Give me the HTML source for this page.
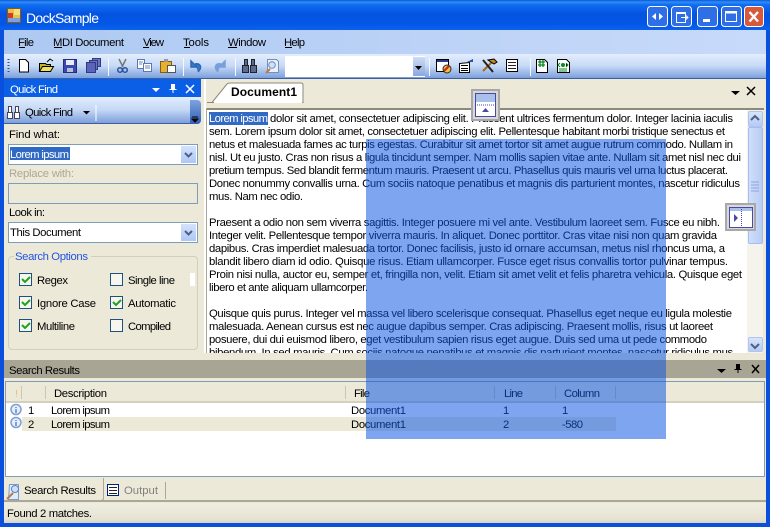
<!DOCTYPE html>
<html><head><meta charset="utf-8"><title>DockSample</title>
<style>
html,body{margin:0;padding:0;width:770px;height:527px;overflow:hidden;background:#ece9d8}
div{position:absolute;box-sizing:border-box}
svg{position:absolute;left:0;top:0}
text{font-family:"Liberation Sans",sans-serif;font-size:11.300px;fill:#000}
</style></head><body>
<div style="left:0;top:0;width:770px;height:527px;background:#0a50dc"></div>
<div style="left:0;top:0;width:770px;height:30px;background:linear-gradient(#0a58d8 0,#2f8cf5 2px,#0f6cf0 5px,#0553e0 14px,#0457e6 24px,#0a62ee 30px)"></div>
<div style="left:4px;top:30px;width:762px;height:24px;background:linear-gradient(90deg,#adc9f2,#c8dafa)"></div>
<div style="left:4px;top:54px;width:762px;height:25px;background:linear-gradient(#e4eefd,#c6d9f6 50%,#7ca0dc);border-bottom:1px solid #3b5f9e"></div>
<div style="left:4px;top:79px;width:762px;height:444px;background:#ece9d8"></div>
<div style="left:4px;top:79px;width:197px;height:18px;background:#0a5fe6"></div>
<div style="left:4px;top:97px;width:197px;height:27px;background:linear-gradient(#e3eefd,#c4d7f5 50%,#7d9fdb);border-bottom:1px solid #3b5f9e;border-radius:0 4px 4px 0"></div>
<div style="left:190px;top:100px;width:11px;height:24px;background:linear-gradient(#7fa2dd,#2f5fb8);border-radius:0 4px 4px 0"></div>
<div style="left:204px;top:79px;width:2px;height:274px;background:#fff"></div>
<div style="left:207px;top:108px;width:557px;height:2px;background:#8d8a7a"></div>
<div style="left:207px;top:110px;width:556px;height:243px;background:#fff;overflow:hidden"></div>
<div style="left:206px;top:108px;width:1px;height:246px;background:#aca899"></div>
<div style="left:4px;top:353px;width:762px;height:7px;background:#ece9d8"></div>
<div style="left:4px;top:360px;width:762px;height:18px;background:#a9a594"></div>
<div style="left:5px;top:381px;width:760px;height:96px;background:#fff;border:1px solid #7f9db9"></div>
<div style="left:6px;top:382px;width:758px;height:21px;background:#ece9d8;border-bottom:2px solid #d4d0c0"></div>
<div style="left:22px;top:417px;width:594px;height:14px;background:#ece9d8"></div>
<div style="left:4px;top:477px;width:762px;height:25px;background:#ece9d8;border-bottom:2px solid #aca899"></div>
<div style="left:4px;top:503px;width:762px;height:20px;background:linear-gradient(#f0eee2,#e6e3d2 80%,#d8d5c4)"></div>
<div style="left:8px;top:144px;width:190px;height:21px;background:#fff;border:1px solid #7f9db9"></div>
<div style="left:8px;top:183px;width:190px;height:21px;background:#ece9d8;border:1px solid #7f9db9"></div>
<div style="left:8px;top:222px;width:190px;height:21px;background:#fff;border:1px solid #7f9db9"></div>
<div style="left:181px;top:146px;width:15px;height:17px;background:linear-gradient(#d5e2fb,#aec7f5)"></div>
<div style="left:181px;top:224px;width:15px;height:17px;background:linear-gradient(#d5e2fb,#aec7f5)"></div>
<div style="left:10px;top:147px;width:60px;height:13px;background:#316ac5"></div>
<div style="left:8px;top:256px;width:190px;height:94px;border:1px solid #d0d0bf;border-radius:4px"></div>
<div style="left:14px;top:250px;width:77px;height:12px;background:#ece9d8"></div>
<div style="left:190px;top:273px;width:5px;height:13px;background:#fff"></div>
<div style="left:209px;top:112px;width:59px;height:13px;background:#316ac5"></div>
<div style="left:285px;top:56px;width:140px;height:21px;background:#fff"></div>
<div style="left:413px;top:57px;width:12px;height:19px;background:linear-gradient(#cfdcf6,#8aa7de)"></div>
<div style="left:747px;top:110px;width:16px;height:243px;background:#f4f4ec"></div>
<div style="left:748px;top:111px;width:15px;height:16px;background:linear-gradient(#d8e5fb,#b5caf5);border:1px solid #b0c4ec;border-radius:2px"></div>
<div style="left:748px;top:127px;width:15px;height:117px;background:linear-gradient(90deg,#d0dffa,#b7ccf6);border:1px solid #a6bdf0;border-radius:2px"></div>
<div style="left:748px;top:337px;width:15px;height:15px;background:linear-gradient(#d8e5fb,#b5caf5);border:1px solid #b0c4ec;border-radius:2px"></div>

<svg width="770" height="527" viewBox="0 0 770 527">
<g>
<text x="209" y="122" textLength="59" lengthAdjust="spacing" style="fill:#fff">Lorem ipsum</text>
<text x="270" y="122" textLength="463" lengthAdjust="spacing">dolor sit amet, consectetuer adipiscing elit. Praesent ultrices fermentum dolor. Integer lacinia iaculis</text>
<text x="209" y="135" textLength="516" lengthAdjust="spacing">sem. Lorem ipsum dolor sit amet, consectetuer adipiscing elit. Pellentesque habitant morbi tristique senectus et</text>
<text x="209" y="148" textLength="524" lengthAdjust="spacing">netus et malesuada fames ac turpis egestas. Curabitur sit amet tortor sit amet augue rutrum commodo. Nullam in</text>
<text x="209" y="161" textLength="532" lengthAdjust="spacing">nisl. Ut eu justo. Cras non risus a ligula tincidunt semper. Nam mollis sapien vitae ante. Nullam sit amet nisl nec dui</text>
<text x="209" y="174" textLength="519" lengthAdjust="spacing">pretium tempus. Sed blandit fermentum mauris. Praesent ut arcu. Phasellus quis mauris vel urna luctus placerat.</text>
<text x="209" y="187" textLength="531" lengthAdjust="spacing">Donec nonummy convallis urna. Cum sociis natoque penatibus et magnis dis parturient montes, nascetur ridiculus</text>
<text x="209" y="200" textLength="94" lengthAdjust="spacing">mus. Nam nec odio.</text>
<text x="209" y="226" textLength="511" lengthAdjust="spacing">Praesent a odio non sem viverra sagittis. Integer posuere mi vel ante. Vestibulum laoreet sem. Fusce eu nibh.</text>
<text x="209" y="239" textLength="508" lengthAdjust="spacing">Integer velit. Pellentesque tempor viverra mauris. In aliquet. Donec porttitor. Cras vitae nisi non quam gravida</text>
<text x="209" y="252" textLength="516" lengthAdjust="spacing">dapibus. Cras imperdiet malesuada tortor. Donec facilisis, justo id ornare accumsan, metus nisl rhoncus uma, a</text>
<text x="209" y="265" textLength="519" lengthAdjust="spacing">blandit libero diam id odio. Quisque risus. Etiam ullamcorper. Fusce eget risus convallis tortor pulvinar tempus.</text>
<text x="209" y="278" textLength="533" lengthAdjust="spacing">Proin nisi nulla, auctor eu, semper et, fringilla non, velit. Etiam sit amet velit et felis pharetra vehicula. Quisque eget</text>
<text x="209" y="291" textLength="159" lengthAdjust="spacing">libero et ante aliquam ullamcorper.</text>
<text x="209" y="317" textLength="523" lengthAdjust="spacing">Quisque quis purus. Integer vel massa vel libero scelerisque consequat. Phasellus eget neque eu ligula molestie</text>
<text x="209" y="330" textLength="504" lengthAdjust="spacing">malesuada. Aenean cursus est nec augue dapibus semper. Cras adipiscing. Praesent mollis, risus ut laoreet</text>
<text x="209" y="343" textLength="498" lengthAdjust="spacing">posuere, dui dui euismod libero, eget vestibulum sapien risus eget augue. Duis sed uma ut pede commodo</text>
</g>
<defs><clipPath id="cl"><rect x="207" y="344" width="540" height="9"/></clipPath></defs>
<text x="209" y="356" clip-path="url(#cl)" textLength="527" lengthAdjust="spacing">bibendum. In sed mauris. Cum sociis natoque penatibus et magnis dis parturient montes, nascetur ridiculus mus.</text>

<!-- Title -->
<text x="26" y="23" style="font-size:14px;fill:#fff" textLength="73" lengthAdjust="spacing">DockSample</text>
<rect x="7.500" y="8.500" width="13" height="14" fill="#e8c04a" stroke="#8a5a10"/><rect x="8" y="13" width="5" height="5" fill="#d23a2a"/><rect x="14" y="9" width="6" height="6" fill="#f5e080"/><rect x="8" y="18" width="12" height="4" fill="#7fa0d8"/>
<g fill="none" stroke="#fff">
<rect x="647.500" y="6.500" width="20" height="20" rx="3" fill="#2e6fe8"/><rect x="671.500" y="6.500" width="20" height="20" rx="3" fill="#2e6fe8"/><rect x="697.500" y="6.500" width="20" height="20" rx="3" fill="#2e6fe8"/><rect x="721.500" y="6.500" width="20" height="20" rx="3" fill="#2e6fe8"/><rect x="744.500" y="6.500" width="19" height="20" rx="3" fill="#d9583a"/>
<path d="M676.500 12.500h9v10h-9z"/><path d="M676 13.500h10" /><path d="M681 17.500h7M686 15.500l2 2-2 2"/>
<rect x="725.500" y="11.500" width="11" height="10"/><path d="M725 12.500h12" stroke-width="2"/>
<path d="M749.500 12l8.500 9.500M758 12l-8.500 9.500" stroke-width="2.400"/>
</g>
<path d="M656 13v7l-4-3.500zM659 13v7l4-3.500z" fill="#fff"/><rect x="703" y="19" width="7" height="3" fill="#fff"/>

<!-- Menu -->
<text x="18" y="46" textLength="16" lengthAdjust="spacing">File</text><text x="53" y="46" textLength="71" lengthAdjust="spacing">MDI Document</text><text x="143" y="46" textLength="21" lengthAdjust="spacing">View</text><text x="183" y="46" textLength="26" lengthAdjust="spacing">Tools</text><text x="228" y="46" textLength="38" lengthAdjust="spacing">Window</text><text x="284" y="46" textLength="21" lengthAdjust="spacing">Help</text>
<path d="M19 47.500h6M54 47.500h8M143 47.500h6M184 47.500h6M228 47.500h9M285 47.500h7" stroke="#000"/>

<!-- Toolbar icons -->
<path d="M8.500 59v1M8.500 62v1M8.500 65v1M8.500 68v1M8.500 71v1" stroke="#2a4f90" stroke-width="2"/>
<path d="M19.500 59.500h6l3 3v9.500h-9z" fill="#fff" stroke="#000"/>
<path d="M39.500 71.500v-8h6l1 1h4v7z" fill="#c8b420" stroke="#000"/><path d="M39.500 71.500l3-5h11l-3 5z" fill="#f0e060" stroke="#000"/><path d="M47 62l3-3 3 2" fill="none" stroke="#000"/>
<rect x="63.500" y="59.500" width="13" height="13" fill="#3a48b0" stroke="#20307a"/><rect x="66" y="60" width="8" height="5" fill="#e8ecf8"/><rect x="67" y="68" width="6" height="4" fill="#b8c0d8"/>
<rect x="92.500" y="58.500" width="8" height="8" fill="#6a74c0" stroke="#303a80"/><rect x="89.500" y="60.500" width="8" height="9" fill="#6a74c0" stroke="#303a80"/><rect x="86.500" y="62.500" width="9" height="10" fill="#5a64b8" stroke="#303a80"/>
<path d="M108.500 58v18M183.500 58v18M235.500 58v18M429.500 58v18M530.500 58v18" stroke="#f4f8ff"/>
<path d="M119 59l4 8M126 59l-4 8" stroke="#777" stroke-width="1.500"/><circle cx="120" cy="70" r="2.300" fill="none" stroke="#2a50a0" stroke-width="1.500"/><circle cx="125" cy="70" r="2.300" fill="none" stroke="#2a50a0" stroke-width="1.500"/>
<g fill="#fff" stroke="#5a78b8"><rect x="137.500" y="59.500" width="7" height="9"/><rect x="143.500" y="63.500" width="8" height="8"/></g><path d="M139 62h4M139 64h3M145 66h5M145 68h5" stroke="#6a88c0"/>
<rect x="160.500" y="61.500" width="11" height="11" fill="#e8b030" stroke="#806010"/><rect x="164" y="59" width="4" height="3" fill="#999"/><rect x="167.500" y="65.500" width="8" height="7" fill="#fff" stroke="#555"/>
<path d="M191 61v6h6zM195 64c5-1 8 3 3 8" fill="#3a78c8" stroke="#2a68b8" stroke-width="1.500"/><path d="M225 61v6h-6zM221 64c-5-1-8 3-3 8" fill="#7a9edb" stroke="#7a9edb" stroke-width="1.500"/>
<g fill="#5a6a90" stroke="#222"><rect x="242.500" y="65.500" width="6" height="7"/><rect x="250.500" y="65.500" width="6" height="7"/><rect x="244.500" y="59.500" width="3" height="6"/><rect x="251.500" y="59.500" width="3" height="6"/></g>
<path d="M267.500 59.500h9l2 2v11h-11z" fill="#e8f0fc" stroke="#7a90b0"/><circle cx="272" cy="65" r="3.300" fill="#cfe0fa" stroke="#6a88c0"/><path d="M266 73l4-4" stroke="#c07a40" stroke-width="2"/>
<path d="M415 66h7l-3.500 4z" fill="#000"/>
<rect x="436.500" y="59.500" width="12" height="12" fill="#fff" stroke="#000"/><rect x="437" y="60" width="11" height="2" fill="#2a3a90"/><circle cx="447" cy="69" r="4" fill="#e8c838" stroke="#2a2a2a"/><path d="M444 71l5-5" stroke="#d02020" stroke-width="2"/>
<path d="M459.500 63.500l10-1v10h-10z" fill="#fff" stroke="#000"/><path d="M461 65.500h7M461 68.500h7M461 70.500h7" stroke="#000"/><path d="M467 62l6-3v3z" fill="#2a4fa0"/>
<path d="M483 71l9-9" stroke="#a06a20" stroke-width="2"/><path d="M483 60l10 12" stroke="#222" stroke-width="2"/><path d="M488 60l6-1 3 3-3 2z" fill="#c88820" stroke="#000"/>
<rect x="506.500" y="59.500" width="11" height="12" fill="#fff" stroke="#000"/><path d="M508 62.500h8M508 65.500h8M508 68.500h8" stroke="#222"/>
<path d="M536.500 59.500h8l3 3v10h-11z" fill="#fff" stroke="#000"/><path d="M540 60v7M543 60v7M538 62h7M538 65h7" stroke="#0a8a20" stroke-width="1.300"/>
<path d="M557.500 59.500h9l3 3v10h-12z" fill="#fff" stroke="#000"/><circle cx="563" cy="65" r="2" fill="#0a8a20"/><path d="M558 65l2-2M560 67l-2-2M566 63l2 2-2 2M559 69h8M559 71h8" stroke="#0a8a20"/>

<!-- Quick Find -->
<text x="10" y="93" style="fill:#fff" textLength="48" lengthAdjust="spacing">Quick Find</text>
<path d="M152 88h8l-4 4z" fill="#fff"/><path d="M171 84h4v5h1.500v1h-3v3h-1v-3h-3v-1h1.500z" fill="#fff"/><path d="M186 85l8 8M194 85l-8 8" stroke="#fff" stroke-width="1.500"/>
<g fill="#fff" stroke="#445"><rect x="7.500" y="112.500" width="5" height="6"/><rect x="14.500" y="112.500" width="5" height="6"/><rect x="8.500" y="106.500" width="3" height="6"/><rect x="15.500" y="106.500" width="3" height="6"/></g>
<text x="25" y="116" textLength="48" lengthAdjust="spacing">Quick Find</text>
<path d="M83 111h7l-3.500 3.500z" fill="#000"/><path d="M96 105v16" stroke="#fff"/><path d="M192 117h6M192 119h6l-3 3z" stroke="#000"/>

<text x="9" y="138" textLength="51" lengthAdjust="spacing">Find what:</text><text x="10" y="158" style="fill:#fff" textLength="59" lengthAdjust="spacing">Lorem ipsum</text>
<text x="9" y="177" style="fill:#aca899" textLength="65" lengthAdjust="spacing">Replace with:</text><text x="9" y="216" textLength="36" lengthAdjust="spacing">Look in:</text><text x="10" y="236" textLength="71" lengthAdjust="spacing">This Document</text>
<path d="M185 153l3.500 3.500 3.500-3.500M185 231l3.500 3.500 3.500-3.500" fill="none" stroke="#4d6185" stroke-width="2"/>
<text x="15" y="260" style="fill:#2255e0" textLength="73" lengthAdjust="spacing">Search Options</text>
<g fill="#f6f5ee" stroke="#1c5180">
<rect x="19.500" y="273.500" width="12" height="12"/><rect x="19.500" y="296.500" width="12" height="12"/><rect x="19.500" y="319.500" width="12" height="12"/>
<rect x="110.500" y="273.500" width="12" height="12"/><rect x="110.500" y="296.500" width="12" height="12"/><rect x="110.500" y="319.500" width="12" height="12"/>
</g>
<path d="M22 279l3 3 5-5M22 302l3 3 5-5M22 325l3 3 5-5M113 302l3 3 5-5" fill="none" stroke="#21a121" stroke-width="2"/>
<text x="37" y="284" textLength="31" lengthAdjust="spacing">Regex</text><text x="37" y="307" textLength="59" lengthAdjust="spacing">Ignore Case</text><text x="37" y="330" textLength="38" lengthAdjust="spacing">Multiline</text>
<text x="128" y="284" textLength="47" lengthAdjust="spacing">Single line</text><text x="128" y="307" textLength="48" lengthAdjust="spacing">Automatic</text><text x="128" y="330" textLength="43" lengthAdjust="spacing">Compiled</text>

<!-- Doc tab -->
<path d="M212 102.500l15-18.500q1-1 3-1h71q2 0 2 2v17.500z" fill="#fff" stroke="#8d8a7a"/>
<path d="M214 102.500h88" stroke="#fff"/>
<path d="M207 102.500h5" stroke="#8d8a7a"/>
<text x="231" y="96" style="font-size:12px;font-weight:bold" textLength="66" lengthAdjust="spacing">Document1</text>
<path d="M731 91h9l-4.500 4z" fill="#000"/><path d="M747 87l8 8M755 87l-8 8" stroke="#000" stroke-width="1.500"/>

<path d="M751 120l4-4 4 4M751 344l4 4 4-4" fill="none" stroke="#4d6185" stroke-width="2"/>
<path d="M751 182h8M751 185h8M751 188h8M751 191h8" stroke="#8aa4de"/>

<!-- Results -->
<text x="9" y="374" textLength="71" lengthAdjust="spacing">Search Results</text>
<path d="M717 369h9l-4.500 4z" fill="#000"/><path d="M736 364h4v5h1.500v1h-3v3h-1v-3h-3v-1h1.500z" fill="#000"/><path d="M752 365l7 8M759 365l-7 8" stroke="#000" stroke-width="1.500"/>
<path d="M21.500 386v13M45.500 386v13M345.500 386v13M494.500 386v13M555.500 386v13M615.500 386v13" stroke="#c9c6b4"/>
<text x="15" y="397" style="fill:#e8c060;font-size:10px">!</text>
<text x="54" y="397" textLength="53" lengthAdjust="spacing">Description</text><text x="354" y="397" textLength="16" lengthAdjust="spacing">File</text><text x="504" y="397" textLength="19" lengthAdjust="spacing">Line</text><text x="564" y="397" textLength="36" lengthAdjust="spacing">Column</text>
<circle cx="16" cy="409.500" r="5" fill="#e6eefb" stroke="#7d9fd8" stroke-width="1.500"/><circle cx="16" cy="422.500" r="5" fill="#e6eefb" stroke="#7d9fd8" stroke-width="1.500"/><path d="M16 407v1M16 409v4M16 420v1M16 422v4" stroke="#1f4fb0"/>
<text x="28" y="414">1</text><text x="28" y="428">2</text><text x="51" y="414" textLength="59" lengthAdjust="spacing">Lorem ipsum</text><text x="51" y="428" textLength="59" lengthAdjust="spacing">Lorem ipsum</text>
<text x="351" y="414" textLength="55" lengthAdjust="spacing">Document1</text><text x="351" y="428" textLength="55" lengthAdjust="spacing">Document1</text><text x="503" y="414">1</text><text x="503" y="428">2</text><text x="562" y="414">1</text><text x="562" y="428" textLength="21" lengthAdjust="spacing">-580</text>
<!-- Bottom tabs -->
<path d="M103.500 478v21l-3 2H5" fill="none" stroke="#aca899"/><path d="M165.500 482v17" stroke="#aca899"/>
<path d="M104 501h660" stroke="#aca899"/>
<path d="M9.500 484.500h9v15h-10z" fill="#dfeafa" stroke="#7a9ad0"/><circle cx="15" cy="489" r="3.500" fill="#cfe0fa" stroke="#5a80c0"/><path d="M7 499l6-6" stroke="#c07a40" stroke-width="2"/>
<text x="24" y="494" textLength="72" lengthAdjust="spacing">Search Results</text>
<rect x="107.500" y="484.500" width="11" height="11" fill="#fff" stroke="#002080"/><path d="M109 487.500h8M109 490.500h8M109 493.500h8" stroke="#222"/>
<text x="124" y="494" style="fill:#808080" textLength="34" lengthAdjust="spacing">Output</text>
<text x="7" y="517" textLength="85" lengthAdjust="spacing">Found 2 matches.</text>
</svg>
<div style="left:366px;top:139px;width:300px;height:300px;background:rgba(12,87,227,.535)"></div>
<svg width="770" height="527" viewBox="0 0 770 527">
<rect x="472" y="90" width="27" height="30" fill="#d8d8d4" stroke="#a8a8a8" stroke-width="2"/>
<rect x="475.500" y="93.500" width="20" height="23" fill="#fff" stroke="#4848a8"/><rect x="476" y="94" width="19" height="8" fill="#a9c0ec"/><path d="M477 105h18" stroke="#4848a8" stroke-dasharray="1 1"/><path d="M482 112l3.500-4 3.500 4z" fill="#4848a8"/>
<rect x="726" y="204" width="29" height="26" fill="#d8d8d4" stroke="#a8a8a8" stroke-width="2"/>
<rect x="729.500" y="207.500" width="23" height="20" fill="#fff" stroke="#4848a8"/><rect x="730" y="208" width="22" height="3" fill="#a9c0ec"/><path d="M741.500 209v18" stroke="#4848a8" stroke-dasharray="1 1"/><path d="M734 214l4 4-4 4z" fill="#4848a8"/>
</svg>
</body></html>
